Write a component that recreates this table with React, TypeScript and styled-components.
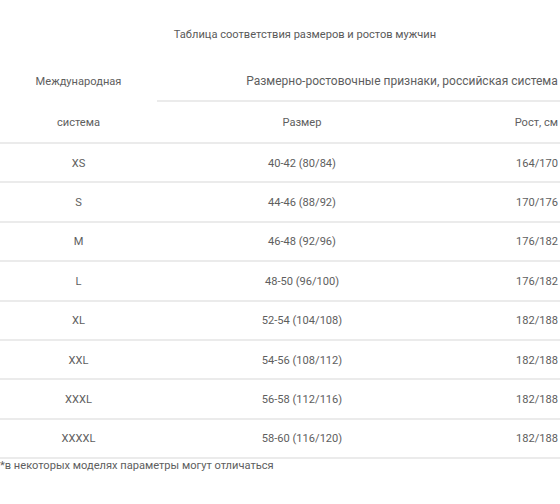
import { createGlobalStyle, styled } from 'styled-components';

const rows = [
  { intl: 'XS', size: '40-42 (80/84)', height: '164/170' },
  { intl: 'S', size: '44-46 (88/92)', height: '170/176' },
  { intl: 'M', size: '46-48 (92/96)', height: '176/182' },
  { intl: 'L', size: '48-50 (96/100)', height: '176/182' },
  { intl: 'XL', size: '52-54 (104/108)', height: '182/188' },
  { intl: 'XXL', size: '54-56 (108/112)', height: '182/188' },
  { intl: 'XXXL', size: '56-58 (112/116)', height: '182/188' },
  { intl: 'XXXXL', size: '58-60 (116/120)', height: '182/188' },
];

export default function App() {
  return (
    <Page>
      <GlobalStyle />
      <Title>Таблица соответствия размеров и ростов мужчин</Title>
      <Table>
        <colgroup>
          <col style={{ width: 157 }} />
          <col style={{ width: 290 }} />
          <col style={{ width: 113 }} />
        </colgroup>
        <thead>
          <tr>
            <HeadCell $line={false}>Международная</HeadCell>
            <SpanCell colSpan={2}>Размерно-ростовочные признаки, российская система</SpanCell>
          </tr>
          <tr>
            <HeadCell $line $short>
              система
            </HeadCell>
            <HeadCell $line $short>
              Размер
            </HeadCell>
            <HeadCell $line $short $right>
              Рост, см
            </HeadCell>
          </tr>
        </thead>
        <tbody>
          {rows.map((r) => (
            <tr key={r.intl}>
              <Cell>{r.intl}</Cell>
              <Cell>{r.size}</Cell>
              <Cell $right>{r.height}</Cell>
            </tr>
          ))}
        </tbody>
      </Table>
      <Note>*в некоторых моделях параметры могут отличаться</Note>
    </Page>
  );
}

const GlobalStyle = createGlobalStyle`
  body {
    margin: 0;
    background: #ffffff;
    font-family: Roboto, "Liberation Sans", sans-serif;
    overflow: hidden;
  }
`;

const Page = styled.div`
  width: 560px;
  height: 504px;
  overflow: hidden;
  color: #5e5e5e;
  font-size: 11.1px;
`;

const Title = styled.div`
  height: 60px;
  padding-left: 50px;
  padding-top: 8px;
  box-sizing: border-box;
  display: flex;
  align-items: center;
  justify-content: center;
  color: #5a5a5a;
`;

const Table = styled.table`
  width: 560px;
  border-collapse: collapse;
  table-layout: fixed;
`;

const HeadCell = styled.th<{ $line: boolean; $right?: boolean; $short?: boolean }>`
  height: ${(p) => (p.$short ? '39px' : '38px')};
  padding: ${(p) => (p.$short ? '1px' : '2px')} ${(p) => (p.$right ? '2px' : '0')} 0 0;
  font-weight: 400;
  text-align: ${(p) => (p.$right ? 'right' : 'center')};
  white-space: nowrap;
  border-bottom: ${(p) => (p.$line ? '2px solid #ebebeb' : 'none')};
`;

const SpanCell = styled.th`
  height: 38px;
  padding: 2px 0 0 87px;
  font-size: 12px;
  font-weight: 400;
  text-align: center;
  white-space: nowrap;
  border-bottom: 2px solid #ebebeb;
`;

const Cell = styled.td<{ $right?: boolean }>`
  height: 36.4px;
  padding: 1px ${(p) => (p.$right ? '2px' : '0')} 0 0;
  text-align: ${(p) => (p.$right ? 'right' : 'center')};
  white-space: nowrap;
  border-bottom: 2px solid #ebebeb;
`;

const Note = styled.div`
  line-height: 14px;
`;
